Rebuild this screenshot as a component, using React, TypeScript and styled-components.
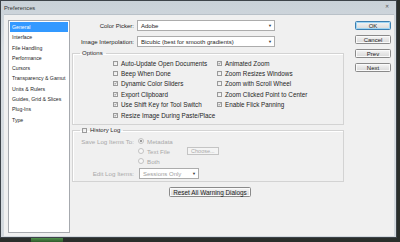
import React from "react";
import styled, { createGlobalStyle } from "styled-components";

const GlobalStyle = createGlobalStyle`
  html, body {
    margin: 0;
    padding: 0;
    background: #2a2e2b;
  }
  body {
    width: 400px;
    height: 242px;
    overflow: hidden;
    font-family: "Liberation Sans", Arial, sans-serif;
    color: #1e1e1e;
  }
`;

const Desktop = styled.div`
  display: flex;
  flex-direction: column;
  width: 400px;
  height: 242px;
`;

const Window = styled.div`
  width: 397px;
  height: 238px;
  box-sizing: border-box;
  border: 1px solid #3d4349;
  background: linear-gradient(#c9d1d8, #d7dde2 20%, #d3d9de);
  display: flex;
  flex-direction: column;
  padding: 0 2px 1px 3px;
`;

const TitleBar = styled.div`
  height: 13px;
  display: flex;
  align-items: center;
  justify-content: space-between;
  font-size: 5.8px;
  color: #333;
`;

const CloseBox = styled.div`
  width: 14px;
  height: 8px;
  margin-top: -4px;
  display: flex;
  align-items: center;
  justify-content: center;
  font-size: 5px;
  color: #555;
`;

const Client = styled.div`
  flex: 1;
  display: flex;
  background: #f0f0f0;
  padding: 5px 0 3px 4px;
  border-top: 1px solid #b9c1c8;
`;

const Sidebar = styled.ul`
  list-style: none;
  margin: 0;
  padding: 1px;
  width: 62px;
  box-sizing: border-box;
  background: #fff;
  border: 1px solid #a6a9ae;
`;

const SideItem = styled.li<{ $active?: boolean }>`
  height: 10.3px;
  line-height: 10.3px;
  padding-left: 2px;
  font-size: 5.2px;
  white-space: nowrap;
  color: ${(p) => (p.$active ? "#fff" : "#262626")};
  background: ${(p) => (p.$active ? "#3399ff" : "transparent")};
`;

const Main = styled.div`
  width: 272px;
  margin-left: 2px;
  display: flex;
  flex-direction: column;
`;

const FieldRow = styled.div<{ $gap?: number }>`
  display: grid;
  grid-template-columns: 62px 1fr;
  column-gap: 3px;
  align-items: center;
  margin-top: ${(p) => p.$gap ?? 0}px;
  font-size: 6px;
`;

const Label = styled.span<{ $disabled?: boolean }>`
  text-align: right;
  white-space: nowrap;
  color: ${(p) => (p.$disabled ? "#a9a9a9" : "#1e1e1e")};
`;

const Select = styled.div<{ $w: number; $disabled?: boolean }>`
  width: ${(p) => p.$w}px;
  height: 11px;
  box-sizing: border-box;
  border: 1px solid #acacac;
  background: #fff;
  display: flex;
  align-items: center;
  justify-content: space-between;
  padding: 0 2px 0 3px;
  font-size: 6px;
  color: ${(p) => (p.$disabled ? "#a0a0a0" : "#1e1e1e")};
  white-space: nowrap;
`;

const Arrow = styled.span`
  font-size: 4px;
  color: #333;
`;

const Group = styled.fieldset<{ $gap: number }>`
  margin: ${(p) => p.$gap}px 0 0 0;
  padding: 0;
  border: 1px solid #d3d3d3;
  box-shadow: inset 1px 1px 0 #fff;
  min-width: 0;
`;

const Legend = styled.legend`
  margin-left: 7px;
  padding: 0 3px 0 2px;
  height: 7px;
  font-size: 6px;
  line-height: 7px;
  display: flex;
  align-items: center;
  gap: 3px;
`;

const OptionCols = styled.div`
  display: flex;
  padding: 1px 0 4px 40px;
`;

const OptionCol = styled.div<{ $w?: number }>`
  width: ${(p) => (p.$w ? `${p.$w}px` : "auto")};
  display: flex;
  flex-direction: column;
`;

const Check = styled.label`
  height: 10.4px;
  display: flex;
  align-items: center;
  gap: 3px;
  font-size: 6.3px;
  white-space: nowrap;
  color: #1e1e1e;
`;

const Box = styled.span`
  width: 5px;
  height: 5px;
  box-sizing: border-box;
  border: 1px solid #9a9a9a;
  background: linear-gradient(135deg, #e6e6e6, #fbfbfb);
  display: flex;
  align-items: center;
  justify-content: center;
  flex-shrink: 0;
`;

const Radio = styled.span<{ $on?: boolean }>`
  width: 6px;
  height: 6px;
  box-sizing: border-box;
  border-radius: 50%;
  border: 1px solid #c2c2c2;
  background: ${(p) =>
    p.$on ? "radial-gradient(circle, #9a9a9a 0 1.3px, #f4f4f4 1.6px)" : "#f7f7f7"};
  flex-shrink: 0;
`;

const HistoryGrid = styled.div`
  display: grid;
  grid-template-columns: 61px 1fr;
  column-gap: 4px;
  grid-auto-rows: 10px;
  align-items: center;
  padding: 2px 0 2px 0;
  font-size: 6.2px;
`;

const RadioItem = styled.div`
  display: flex;
  align-items: center;
  gap: 3px;
  color: #a9a9a9;
  white-space: nowrap;
`;

const EditRow = styled(FieldRow)`
  grid-template-columns: 61px 1fr;
  column-gap: 5px;
  padding-bottom: 2px;
  font-size: 6.2px;
`;

const SmallButton = styled.div`
  height: 8px;
  box-sizing: border-box;
  margin-left: 14px;
  padding: 0 3px;
  border: 1px solid #c4c4c4;
  background: #f4f4f4;
  display: flex;
  align-items: center;
  font-size: 5.5px;
  color: #a9a9a9;
`;

const PushButton = styled.div<{ $default?: boolean }>`
  height: 9px;
  box-sizing: border-box;
  border: 1px solid ${(p) => (p.$default ? "#3c7fb1" : "#8a8a8a")};
  border-radius: 1.5px;
  background: linear-gradient(#f6f6f6, #e6e6e6 50%, #d9d9d9);
  box-shadow: ${(p) => (p.$default ? "inset 0 0 0 1px #9fd5f3" : "inset 0 0 0 1px #fafafa")};
  display: flex;
  align-items: center;
  justify-content: center;
  font-size: 6px;
  color: #1e1e1e;
  white-space: nowrap;
`;

const ResetButton = styled(PushButton)`
  align-self: center;
  margin: 5px 0 0 4px;
  padding: 0 3px;
  height: 10px;
  font-size: 6.4px;
`;

const ButtonCol = styled.div`
  width: 36px;
  margin: 1px 0 0 11px;
  display: flex;
  flex-direction: column;
  gap: 5px;
`;

const Taskbar = styled.div`
  flex: 1;
  display: flex;
  align-items: stretch;
  padding-left: 31px;
`;

const TaskItem = styled.div`
  width: 32px;
  background: linear-gradient(#4f8f4a, #2f5a2c);
`;

function Tick() {
  return (
    <svg width="5" height="5" viewBox="0 0 5 5">
      <polyline points="0.8,2.6 1.9,3.8 4.2,0.9" fill="none" stroke="#4a4a4a" strokeWidth="0.9" />
    </svg>
  );
}

function CheckItem({ label, checked }: { label: string; checked?: boolean }) {
  return (
    <Check>
      <Box>{checked && <Tick />}</Box>
      {label}
    </Check>
  );
}

const sections = [
  "General",
  "Interface",
  "File Handling",
  "Performance",
  "Cursors",
  "Transparency & Gamut",
  "Units & Rulers",
  "Guides, Grid & Slices",
  "Plug-Ins",
  "Type",
];

const leftOptions: [string, boolean][] = [
  ["Auto-Update Open Documents", false],
  ["Beep When Done", false],
  ["Dynamic Color Sliders", true],
  ["Export Clipboard", true],
  ["Use Shift Key for Tool Switch", true],
  ["Resize Image During Paste/Place", true],
];

const rightOptions: [string, boolean][] = [
  ["Animated Zoom", true],
  ["Zoom Resizes Windows", false],
  ["Zoom with Scroll Wheel", false],
  ["Zoom Clicked Point to Center", false],
  ["Enable Flick Panning", true],
];

export default function App() {
  return (
    <>
      <GlobalStyle />
      <Desktop>
        <Window>
          <TitleBar>
            <span>Preferences</span>
            <CloseBox>✕</CloseBox>
          </TitleBar>
          <Client>
            <Sidebar>
              {sections.map((s, i) => (
                <SideItem key={s} $active={i === 0}>
                  {s}
                </SideItem>
              ))}
            </Sidebar>

            <Main>
              <FieldRow>
                <Label>Color Picker:</Label>
                <Select $w={138}>
                  Adobe
                  <Arrow>▼</Arrow>
                </Select>
              </FieldRow>
              <FieldRow $gap={5}>
                <Label>Image Interpolation:</Label>
                <Select $w={138}>
                  Bicubic (best for smooth gradients)
                  <Arrow>▼</Arrow>
                </Select>
              </FieldRow>

              <Group $gap={3}>
                <Legend>Options</Legend>
                <OptionCols>
                  <OptionCol $w={104}>
                    {leftOptions.map(([l, c]) => (
                      <CheckItem key={l} label={l} checked={c} />
                    ))}
                  </OptionCol>
                  <OptionCol>
                    {rightOptions.map(([l, c]) => (
                      <CheckItem key={l} label={l} checked={c} />
                    ))}
                  </OptionCol>
                </OptionCols>
              </Group>

              <Group $gap={2}>
                <Legend>
                  <Box />
                  History Log
                </Legend>
                <HistoryGrid>
                  <Label $disabled>Save Log Items To:</Label>
                  <RadioItem>
                    <Radio $on />
                    Metadata
                  </RadioItem>
                  <span />
                  <RadioItem>
                    <Radio />
                    Text File
                    <SmallButton>Choose...</SmallButton>
                  </RadioItem>
                  <span />
                  <RadioItem>
                    <Radio />
                    Both
                  </RadioItem>
                </HistoryGrid>
                <EditRow>
                  <Label $disabled>Edit Log Items:</Label>
                  <Select $w={60} $disabled>
                    Sessions Only
                    <Arrow>▼</Arrow>
                  </Select>
                </EditRow>
              </Group>

              <ResetButton>Reset All Warning Dialogs</ResetButton>
            </Main>

            <ButtonCol>
              <PushButton $default>OK</PushButton>
              <PushButton>Cancel</PushButton>
              <PushButton>Prev</PushButton>
              <PushButton>Next</PushButton>
            </ButtonCol>
          </Client>
        </Window>
        <Taskbar>
          <TaskItem />
        </Taskbar>
      </Desktop>
    </>
  );
}
